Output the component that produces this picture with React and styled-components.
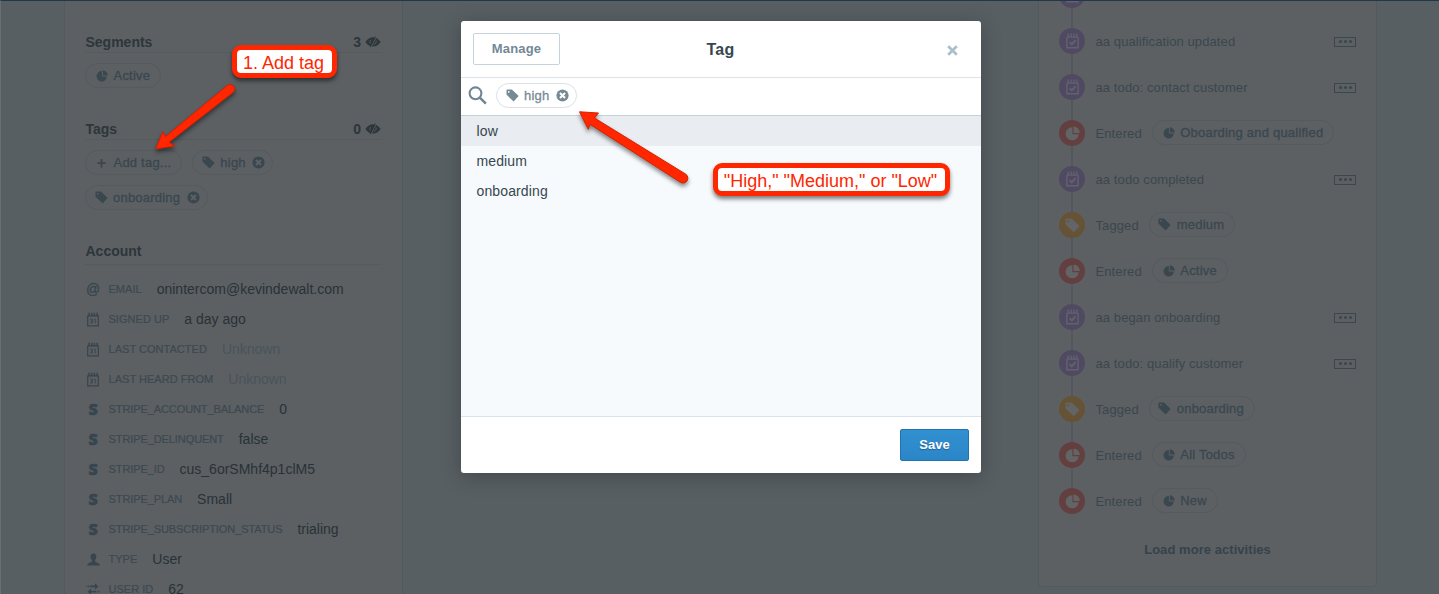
import React from "react";
import styled, { createGlobalStyle, css } from "styled-components";

const Global = createGlobalStyle`
  *, *::before, *::after { box-sizing: border-box; }
  html, body { margin: 0; height: 100%; overflow: hidden; }
  body { font-family: "Liberation Sans", Arial, sans-serif; background: #585f63; }
  svg { display: block; flex: none; }
`;

const medium = css`-webkit-text-stroke: 0.3px currentColor;`;

const Page = styled.div`
  position: relative;
  display: flex;
  justify-content: space-between;
  align-items: flex-start;
  width: 1439px;
  height: 594px;
  padding: 0 62px 0 63px;
  overflow: hidden;
  background: #585f63;
  border-top: 1px solid #22384a;
  border-left: 1px solid #6b6e70;
`;

const ScrollThumb = styled.div`
  position: absolute;
  left: -1px;
  top: 219px;
  width: 1px;
  height: 38px;
  background: #5a5855;
`;

const Panel = styled.section`
  width: 339px;
  background: #5c6063;
  border: 1px solid #4f5a63;
  border-top: 0;
`;

const Profile = styled(Panel)`
  height: 620px;
  padding: 31px 20px 0 20px;
`;

const Activity = styled(Panel)`
  height: 586px;
  border-radius: 0 0 4px 4px;
  padding: 0 20px;
  overflow: hidden;
`;

const Heading = styled.h3`
  display: flex;
  align-items: center;
  justify-content: space-between;
  margin: 0 0 10px;
  height: ${(p) => p.$h || 21}px;
  padding: 0 1px ${(p) => p.$pb || 0}px 0.5px;
  border-bottom: 1px solid #545b61;
  font-size: 14px;
  line-height: 20px;
  font-weight: 700;
  color: #2d363b;
`;

const Count = styled.span`
  display: flex;
  align-items: center;
  gap: 4px;
`;

const Chips = styled.div`
  display: flex;
  flex-wrap: wrap;
  gap: 10px;
  margin-bottom: ${(p) => p.$mb}px;
`;

const ChipBox = styled.span`
  display: inline-flex;
  align-items: center;
  height: 25px;
  padding: 0 ${(p) => (p.$closable ? 7 : 10)}px 0 ${(p) => (p.$icon === "tag" ? 8.5 : 10)}px;
  border: 1px solid ${(p) => (p.$light ? "#dbe1e6" : "#535a60")};
  border-radius: 13px;
  color: ${(p) => (p.$light ? "#768a96" : "#3a474f")};
  font-size: 13px;
  letter-spacing: 0.22px;
  white-space: nowrap;
  ${medium}
  & > b { font-weight: 400; margin: 0 0 0 5.5px; }
  & > b + svg { margin-left: 6.5px; }
`;

const Row = styled.div`
  display: flex;
  align-items: center;
  height: 30px;
  position: relative;
`;

const Attributes = styled.div`
  margin-top: -1px;
`;

const RowIcon = styled.span`
  display: flex;
  justify-content: center;
  width: 16px;
  margin-right: 7.5px;
  color: #38454e;
`;

const StripeMark = styled.span`
  font: 800 16px/20px "Open Sans", sans-serif;
  -webkit-text-stroke: 0.6px currentColor;
`;

const AtMark = styled.span`
  font: 14px/20px "Liberation Sans", sans-serif;
  ${medium}
`;

const Label = styled.span`
  font-size: 11px;
  letter-spacing: ${(p) => (p.$key ? -0.09 : 0.03)}px;
  color: #3d4951;
  text-transform: uppercase;
  white-space: nowrap;
  -webkit-text-stroke: 0.2px currentColor;
`;

const Value = styled.span`
  margin-left: 15px;
  font-size: 14px;
  white-space: nowrap;
  color: ${(p) => (p.$muted ? "#48545b" : "#293237")};
`;

const Timeline = styled.div`
  position: relative;
  margin-top: -29px;
  &::before {
    content: "";
    position: absolute;
    left: 12px;
    top: 23px;
    width: 2px;
    height: 506px;
    background: #53565f;
  }
`;

const Event = styled.div`
  position: relative;
  display: flex;
  align-items: center;
  height: 46px;
  font-size: 13px;
  letter-spacing: 0.1px;
  color: #3b474e;
`;

const tones = { todo: "#4f4a61", pie: "#643f40", tag: "#665335" };

const Disc = styled.span`
  display: flex;
  align-items: center;
  justify-content: center;
  width: 26px;
  height: 26px;
  margin-right: 10.5px;
  border-radius: 50%;
  background: ${(p) => tones[p.$kind]};
  color: ${(p) => (p.$kind === "todo" ? "#636170" : "#626466")};
`;

const EventText = styled.span`
  padding-top: 1px;
  white-space: nowrap;
`;

const ChipSlot = styled.span`
  display: flex;
  margin-left: 10px;
  padding-bottom: 1px;
`;

const More = styled.span`
  display: flex;
  align-items: center;
  justify-content: center;
  gap: 2px;
  width: 22px;
  height: 10px;
  margin: 1px 0 0 auto;
  border: 1px solid #3a474e;
  i { width: 3px; height: 3px; border-radius: 50%; background: #3a474e; }
`;

const LoadMore = styled.div`
  margin-top: 16px;
  text-align: center;
  font-size: 13px;
  font-weight: 700;
  line-height: 20px;
  letter-spacing: 0.05px;
  color: #36434b;
`;

const Modal = styled.div`
  position: absolute;
  left: 460px;
  top: 20px;
  display: flex;
  flex-direction: column;
  width: 520px;
  height: 452px;
  overflow: hidden;
  border-radius: 3px;
  background: #fff;
`;

const ModalShadow = styled.div`
  position: absolute;
  left: 460px;
  top: 20px;
  width: 520px;
  height: 452px;
  border-radius: 3px;
  box-shadow: 0 4px 20px rgba(0, 0, 0, 0.25);
`;

const ModalHeader = styled.header`
  display: grid;
  grid-template-columns: 87px 1fr 87px;
  align-items: center;
  height: 57px;
  padding: 0 12px;
  border-bottom: 1px solid #dde4e9;
`;

const ManageButton = styled.button`
  height: 32px;
  padding: 0;
  border: 1px solid #c4d3dc;
  border-radius: 2px;
  background: #fff;
  color: #728896;
  font: 700 13px/28px "Liberation Sans", sans-serif;
  letter-spacing: 0.15px;
`;

const Title = styled.h2`
  margin: 0;
  padding: 2px 1px 0 0;
  text-align: center;
  font-size: 16px;
  font-weight: 700;
  letter-spacing: 0.2px;
  color: #37474f;
`;

const Close = styled.span`
  justify-self: end;
  margin: 2px 11px 0 0;
  color: #a9bfcc;
`;

const SearchBar = styled.div`
  display: flex;
  align-items: center;
  gap: 9px;
  height: 38px;
  padding: 0 7px 2px;
  border-bottom: 1px solid #c5d0da;
  color: #708592;
`;

const List = styled.div`
  flex: 1;
  background: #f6fafd;
`;

const Option = styled.div`
  height: 30px;
  padding-left: 15.5px;
  background: ${(p) => (p.$active ? "#e9ecf1" : "transparent")};
  color: #37474f;
  font-size: 14px;
  line-height: 30px;
  letter-spacing: 0.13px;
`;

const ModalFooter = styled.footer`
  display: flex;
  align-items: center;
  justify-content: flex-end;
  height: 57px;
  padding: 0 12px;
  border-top: 1px solid #d8e3ec;
`;

const SaveButton = styled.button`
  width: 69px;
  height: 32px;
  padding: 0;
  border: 1px solid #2172ad;
  border-radius: 2px;
  background: linear-gradient(#3190d0, #2b86c8);
  color: #fff;
  font: 700 13px/28px "Liberation Sans", sans-serif;
  text-shadow: 0 1px 1px rgba(0, 0, 0, 0.3);
`;

const Callout = styled.div`
  position: absolute;
  left: ${(p) => p.$x}px;
  top: ${(p) => p.$y}px;
  width: ${(p) => p.$w}px;
  height: 33px;
  padding-right: 2px;
  border: 5px solid #ff2600;
  border-radius: 9px;
  background: #fff;
  box-shadow: 0 3px 4px rgba(0, 0, 0, 0.5);
  color: #ff2600;
  font-size: 18px;
  line-height: 26px;
  text-align: center;
  white-space: nowrap;
`;

const Arrows = styled.svg`
  position: absolute;
  left: -1px;
  top: -1px;
  filter: drop-shadow(0 3px 2px rgba(0, 0, 0, 0.45));
`;

const Pie = ({ size = 12 }) => (
  <svg width={size} height={size} viewBox="0 0 12 12" fill="currentColor">
    <path d="M5.9 1.1 A5.2 5.2 0 1 0 10.9 6.6 H5.9 Z" />
    <path d="M6.8 0.3 A5.2 5.2 0 0 1 11.8 5.6 H6.8 Z" />
  </svg>
);

const Tag = ({ size = 13 }) => (
  <svg width={size} height={size} viewBox="0 0 13 13" fill="currentColor" fillRule="evenodd">
    <path d="M1.4 .5 H5.5 Q6 .5 6.4 .9 L12.2 6.6 Q12.7 7.1 12.2 7.6 L8.1 12 Q7.6 12.5 7.1 12 L.9 6.1 Q.5 5.7 .5 5.2 V1.4 Q.5 .5 1.4 .5 Z M2.8 1.9 A.9 .9 0 1 0 2.8 3.7 A.9 .9 0 1 0 2.8 1.9 Z" />
  </svg>
);

const Remove = ({ ink }) => (
  <svg width="13" height="13" viewBox="0 0 13 13">
    <circle cx="6.5" cy="6.5" r="6.1" fill="currentColor" />
    <path d="M4 4 L9 9 M9 4 L4 9" stroke={ink} strokeWidth="2.1" />
  </svg>
);

const Plus = () => (
  <svg width="12" height="12" viewBox="0 0 12 12">
    <path d="M5.5 2 V10.4 M1.3 6.2 H9.7" stroke="currentColor" strokeWidth="1.8" />
  </svg>
);

const Eye = () => (
  <svg width="16" height="12" viewBox="0 0 16 12">
    <path d="M.3 6 Q3.6 1.2 8 1.2 T15.7 6 Q12.4 10.6 8 10.6 T.3 6Z" fill="currentColor" />
    <path d="M5.6 4 A3 3 0 0 0 5.4 7.6" stroke="#5c6063" fill="none" strokeWidth=".8" />
    <path d="M11.2 1 L6 11" stroke="#5c6063" strokeWidth=".9" />
    <path d="M10.4 .6 L5 11.2" stroke="currentColor" strokeWidth=".9" />
    <path d="M11 4.4 A3.2 3.2 0 0 1 8.8 8.4" stroke="#5c6063" fill="none" strokeWidth=".8" />
  </svg>
);

const Calendar = () => (
  <svg width="12" height="15" viewBox="0 0 12 15" fill="none" stroke="currentColor">
    <path d="M.7 3.7 V13.8 H11.3 V3.7" strokeWidth="1.2" />
    <path d="M.5 3.9 H11.5" strokeWidth="1.4" />
    <path d="M2 .7 V4 M4.7 .7 V4 M7.4 .7 V4 M10.1 .7 V4" strokeWidth="1.5" />
    <path d="M3 7 H5.3 V11 H3 M3.6 9 H5.3 M7 7.6 L8.2 7 V11.4" strokeWidth=".9" />
  </svg>
);

const Todo = () => (
  <svg width="13" height="16" viewBox="0 0 13 16" fill="none" stroke="currentColor">
    <path d="M.9 4.2 V14.8 H12.1 V4.2" strokeWidth="1.4" />
    <path d="M.9 4.2 H12.1" strokeWidth="1.2" />
    <path d="M2.2 .6 V4 M5.1 .6 V4 M8 .6 V4 M10.9 .6 V4" strokeWidth="1.4" />
    <path d="M3.7 9.2 L5.8 11.3 L9.6 7.2" strokeWidth="1.9" />
  </svg>
);

const Person = () => (
  <svg width="13" height="13" viewBox="0 0 13 13" fill="currentColor">
    <path d="M6.5 .4 C8.4 .4 9.5 1.7 9.4 3.6 C9.3 5.4 8.7 6.4 8.1 7 V8.4 C8.8 9.4 12.6 9.4 12.8 12.4 H.2 C.4 9.4 4.2 9.4 4.9 8.4 V7 C4.3 6.4 3.7 5.4 3.6 3.6 C3.5 1.7 4.6 .4 6.5 .4Z" />
  </svg>
);

const Swap = () => (
  <svg width="14" height="12" viewBox="0 0 14 12" fill="currentColor">
    <path d="M4 2.5 H9 V.3 L12.4 3.4 L9 6.4 V4.2 H4Z M2 2.5H3.2V4.2H2Z M.3 2.5H1.2V4.2H.3Z" />
    <path d="M10 7.8 H5 V5.6 L1.6 8.7 L5 11.8 V9.5 H10Z M10.9 7.8H12V9.5H10.9Z M12.8 7.8H13.7V9.5H12.8Z" />
  </svg>
);

const Search = () => (
  <svg width="19" height="19" viewBox="0 0 19 19" fill="none" stroke="currentColor">
    <circle cx="7.5" cy="7.3" r="5.9" strokeWidth="2.1" />
    <path d="M11.8 11.6 L17.9 17.6" strokeWidth="2.5" />
  </svg>
);

const Cross = () => (
  <svg width="11" height="11" viewBox="0 0 11 11">
    <path d="M1.2 1.2 L9.8 9.8 M9.8 1.2 L1.2 9.8" stroke="currentColor" strokeWidth="2.7" />
  </svg>
);

const chipIcons = { pie: <Pie />, tag: <Tag />, plus: <Plus /> };

const Chip = ({ icon, closable, light, children }) => (
  <ChipBox $icon={icon} $light={light} $closable={closable}>
    {chipIcons[icon]}
    <b>{children}</b>
    {closable && <Remove ink={light ? "#fff" : "#5c6063"} />}
  </ChipBox>
);

const attributes = [
  ["at", "Email", "onintercom@kevindewalt.com"],
  ["cal", "Signed up", "a day ago"],
  ["cal", "Last contacted", "Unknown", true],
  ["cal", "Last heard from", "Unknown", true],
  ["stripe", "stripe_account_balance", "0"],
  ["stripe", "stripe_delinquent", "false"],
  ["stripe", "stripe_id", "cus_6orSMhf4p1clM5"],
  ["stripe", "stripe_plan", "Small"],
  ["stripe", "stripe_subscription_status", "trialing"],
  ["person", "Type", "User"],
  ["swap", "User ID", "62"],
];

const attributeIcons = {
  at: <AtMark>@</AtMark>,
  cal: <Calendar />,
  stripe: <StripeMark>S</StripeMark>,
  person: <Person />,
  swap: <Swap />,
};

const events = [
  ["todo", ""],
  ["todo", "aa qualification updated"],
  ["todo", "aa todo: contact customer"],
  ["pie", "Entered", "Oboarding and qualified"],
  ["todo", "aa todo completed"],
  ["tag", "Tagged", "medium"],
  ["pie", "Entered", "Active"],
  ["todo", "aa began onboarding"],
  ["todo", "aa todo: qualify customer"],
  ["tag", "Tagged", "onboarding"],
  ["pie", "Entered", "All Todos"],
  ["pie", "Entered", "New"],
];

const discIcons = { todo: <Todo />, pie: <Pie size={15} />, tag: <Tag size={15} /> };

export default function App() {
  return (
    <>
      <Global />
      <Page>
        <ScrollThumb />
        <Profile>
          <Heading>Segments<Count>3 <Eye /></Count></Heading>
          <Chips $mb={31}><Chip icon="pie">Active</Chip></Chips>
          <Heading>Tags<Count>0 <Eye /></Count></Heading>
          <Chips $mb={31}>
            <Chip icon="plus">Add tag...</Chip>
            <Chip icon="tag" closable>high</Chip>
            <Chip icon="tag" closable>onboarding</Chip>
          </Chips>
          <Heading $h={24} $pb={3}>Account</Heading>
          <Attributes>
            {attributes.map(([icon, label, value, muted]) => (
              <Row key={label}>
                <RowIcon>{attributeIcons[icon]}</RowIcon>
                <Label $key={icon === "stripe"}>{label}</Label>
                <Value $muted={muted}>{value}</Value>
              </Row>
            ))}
          </Attributes>
        </Profile>
        <Activity>
          <Timeline>
            {events.map(([kind, text, chip], i) => (
              <Event key={i}>
                <Disc $kind={kind}>{discIcons[kind]}</Disc>
                <EventText>{text}</EventText>
                {chip && <ChipSlot><Chip icon={kind}>{chip}</Chip></ChipSlot>}
                {kind === "todo" && <More><i /><i /><i /></More>}
              </Event>
            ))}
          </Timeline>
          <LoadMore>Load more activities</LoadMore>
        </Activity>

        <ModalShadow />
        <Modal>
          <ModalHeader>
            <ManageButton>Manage</ManageButton>
            <Title>Tag</Title>
            <Close><Cross /></Close>
          </ModalHeader>
          <SearchBar>
            <Search />
            <Chip icon="tag" closable light>high</Chip>
          </SearchBar>
          <List>
            <Option $active>low</Option>
            <Option>medium</Option>
            <Option>onboarding</Option>
          </List>
          <ModalFooter><SaveButton>Save</SaveButton></ModalFooter>
        </Modal>

        <Callout $x={231} $y={44} $w={105}>1. Add tag</Callout>
        <Callout $x={712} $y={162} $w={237}>"High," "Medium," or "Low"</Callout>
        <Arrows width="1439" height="594" viewBox="0 0 1439 594" fill="#ff2600" stroke="#d42000" strokeWidth="1" strokeLinejoin="round">
          <path d="M155.8 149 L162.8 131.5 L165.3 136.8 L227.5 85.3 A4.6 4.6 0 0 1 233.8 91.8 L169 142.3 L174.8 146 Z" />
          <path d="M579.5 111.8 L598.5 113 L594.5 118 L685.5 174 A4.8 4.8 0 0 1 680.5 182.3 L590 124.3 L588.3 129.3 Z" />
        </Arrows>
      </Page>
    </>
  );
}
